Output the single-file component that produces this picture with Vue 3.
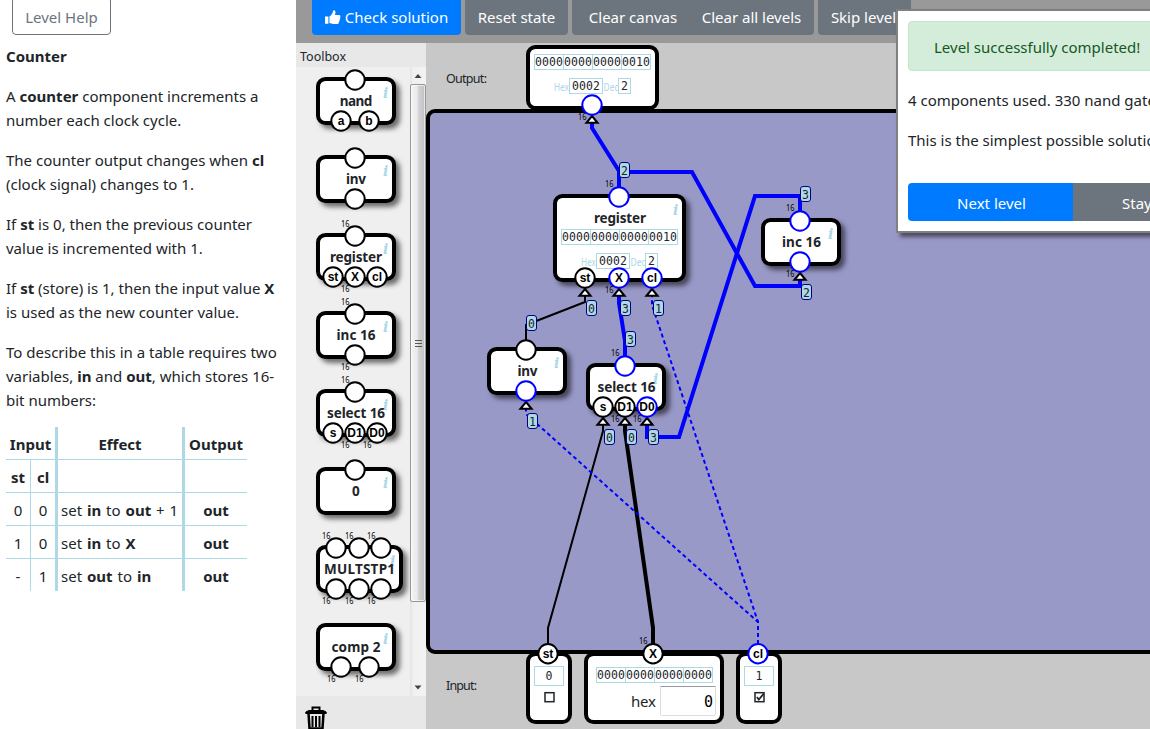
<script setup>
// Builds a pin: x/y of the centre, optional caption, "live" when its signal is high,
// "wide" when it carries 16 bits.
const top = (x, o = {}) => ({ x, y: 3, wy: -6.5, ...o })
const low = (x, t = '', o = {}) => ({ x, y: 44, wy: 59, t, ...o })
const wide = { wide: true }

const tools = [
  { name: 'nand', len: 32.5, w: 80, pins: [top(39), low(25, 'a'), low(53, 'b')] },
  { name: 'inv', len: 20, w: 80, pins: [top(39), low(39)] },
  { name: 'register', len: 52, w: 80, pins: [top(39, wide), low(17, 'st'), low(39, 'X', wide), low(61, 'cl')] },
  { name: 'inc 16', len: 39, w: 80, pins: [top(39, wide), low(39, '', wide)] },
  { name: 'select 16', len: 58, w: 80, pins: [top(39, wide), low(17, 's'), low(39, 'D1', wide), low(61, 'D0', wide)] },
  { name: '0', len: 8, w: 80, pins: [top(39)] },
  { name: 'MULTSTP1', len: 71, w: 87, pins: [top(20, wide), top(43, wide), top(65, wide), low(20, '', wide), low(43, '', wide), low(65, '', wide)] },
  { name: 'comp 2', len: 49, w: 80, pins: [low(25, '', wide), low(53, '', wide)] }
]

const nodes = [
  { name: 'register', len: 52, x: 553, y: 194, w: 133, h: 88 },
  { name: 'inc 16', len: 39, x: 761, y: 218, w: 80, h: 48 },
  { name: 'inv', len: 20, x: 487, y: 347, w: 80, h: 48 },
  { name: 'select 16', len: 58, x: 586, y: 363, w: 80, h: 48 }
]

const ports = [
  { x: 526, y: 45, w: 133, h: 65 },
  { x: 526, y: 652, w: 46, h: 72 },
  { x: 584, y: 652, w: 140, h: 72 },
  { x: 736, y: 652, w: 46, h: 72 }
]

const pins = [
  { x: 592, y: 105, live: true, arrow: true, w: 120 },
  { x: 619, y: 197, live: true, w: 187 },
  { x: 585, y: 278, t: 'st', arrow: true },
  { x: 619, y: 278, t: 'X', live: true, arrow: true, w: 293 },
  { x: 652, y: 278, t: 'cl', live: true, arrow: true },
  { x: 800, y: 221, live: true, w: 211 },
  { x: 800, y: 262, live: true, arrow: true, w: 277 },
  { x: 526, y: 350 },
  { x: 526, y: 391, live: true, arrow: true },
  { x: 625, y: 366, live: true, w: 356 },
  { x: 603, y: 407, t: 's', arrow: true },
  { x: 625, y: 407, t: 'D1', arrow: true, w: 422 },
  { x: 647, y: 407, t: 'D0', live: true, arrow: true, w: 422 },
  { x: 548, y: 653.7, t: 'st' },
  { x: 653, y: 653.7, t: 'X', w: 644 },
  { x: 758, y: 653.7, t: 'cl', live: true }
]

const wires = [
  { k: 'live', p: '592,122 592,128 619,171 619,187' },
  { k: 'live', p: '619,172 692,172 755,286 800,286 800,278' },
  { k: 'live', p: '800,211 800,196 755,196 679,437 647,437 647,424' },
  { k: 'live', p: '619,295 619,303 625,341 625,357' },
  { k: 'thin', p: '585,295 585,302 526,325 526,341' },
  { k: 'thin', p: '603,424 603,431 548,628 548,645' },
  { k: 'bus', p: '625,424 625,431 653,628 653,645' },
  { k: 'clock', p: '758,644 758,622 526,414 526,408' },
  { k: 'clock', p: '758,644 758,622 652,305 652,295' }
]

const values = [
  [2, 624.5, 170], [3, 805.5, 194], [2, 806.5, 292], [0, 591.5, 308], [3, 625.5, 308], [1, 658.5, 308],
  [0, 531.5, 323], [3, 630.5, 339], [1, 532.5, 421], [0, 609.5, 437], [0, 631.5, 437], [3, 653.5, 437]
]

const words = [
  { x: 534.5, y: 54.5, h: 15, b: 66, bits: ['0000', '0000', '0000', '0010'] },
  { x: 561.5, y: 229.5, h: 15, b: 241, bits: ['0000', '0000', '0000', '0010'] },
  { x: 596.5, y: 667.5, h: 15, b: 679, bits: ['0000', '0000', '0000', '0000'] }
]

const readouts = [{ x: 554, y: 78.5 }, { x: 581, y: 253.5 }]
</script>

<template>
  <div class="page">
    <aside class="help">
      <button class="help-btn">Level Help</button>
      <p><b>Counter</b></p>
      <p>A <b>counter</b> component increments a<br>number each clock cycle.</p>
      <p>The counter output changes when <b>cl</b><br>(clock signal) changes to 1.</p>
      <p>If <b>st</b> is 0, then the previous counter<br>value is incremented with 1.</p>
      <p>If <b>st</b> (store) is 1, then the input value <b>X</b><br>is used as the new counter value.</p>
      <p>To describe this in a table requires two<br>variables, <b>in</b> and <b>out</b>, which stores 16-<br>bit numbers:</p>
      <div class="table">
        <div class="c wide-cell"><b>Input</b></div><div class="c thick"><b>Effect</b></div><div class="c"><b>Output</b></div>
        <div class="c thin-r"><b>st</b></div><div class="c thick"><b>cl</b></div><div class="c thick"></div><div class="c"></div>
        <div class="c thin-r">0</div><div class="c thick">0</div><div class="c thick left"><span>set <b>in</b> to <b>out</b> + 1</span></div><div class="c"><b>out</b></div>
        <div class="c thin-r">1</div><div class="c thick">0</div><div class="c thick left"><span>set <b>in</b> to <b>X</b></span></div><div class="c"><b>out</b></div>
        <div class="c thin-r last">-</div><div class="c thick last">1</div><div class="c thick left last"><span>set <b>out</b> to <b>in</b></span></div><div class="c last"><b>out</b></div>
      </div>
    </aside>

    <main class="main">
      <header class="bar">
        <button class="btn primary check">
          <svg width="16" height="15" viewBox="0 0 16 15"><path fill="#fff" d="M0 6.4h3.400v7.400H0zM4.400 6.600C6 5.600 7.300 3.800 7.700 2.300 7.900 1.100 8 .3 9 .3c1.200 0 1.600 1.100 1.500 2.200-.1 1-.4 1.700-.6 2.500h3.900c1 0 1.700.6 1.700 1.400 0 .6-.3 1-.7 1.200.4.3.5.700.4 1.200-.1.5-.4.9-.8 1 .3.4.3.8.2 1.200-.1.500-.5.800-.9.900.2.400.2.700.1 1-.2.700-.8 1-1.600 1H8.400c-1.600 0-2.500-.800-4-1z"/></svg>
          <span>Check solution</span>
        </button>
        <button class="btn reset"><span>Reset state</span></button>
        <div class="group">
          <button class="btn canvas-btn"><span>Clear canvas</span></button>
          <button class="btn levels"><span>Clear all levels</span></button>
        </div>
        <button class="btn skip"><span>Skip level</span></button>
      </header>

      <div class="work">
        <section class="toolbox">
          <div class="tb-head">Toolbox</div>
          <div class="tb-body">
            <div class="tb-list">
              <svg v-for="t in tools" :key="t.name" class="tool" width="114" height="78" viewBox="-20 -10 114 78">
                <rect class="box shadow" x="2" y="2" :width="t.w - 4" height="44" rx="7.500" />
                <g v-for="(p, i) in t.pins" :key="i">
                  <circle class="pin" :cx="p.x" :cy="p.y" r="9.700" />
                  <text v-if="p.t" class="cap" :x="p.x" :y="p.y + 4.300">{{ p.t }}</text>
                  <text v-if="p.wide" class="bw" :x="p.x - 14" :y="p.wy" textLength="8.500" lengthAdjust="spacingAndGlyphs">16</text>
                </g>
                <text class="info" :x="t.w - 13" y="21">i</text>
                <text class="name" :x="t.w / 2 - t.len / 2" y="29" :textLength="t.len">{{ t.name }}</text>
              </svg>
            </div>
            <div class="scroll">
              <svg width="16" height="17" viewBox="0 0 16 17"><path d="M4.500 11l3.500-4 3.500 4z" fill="#444" /></svg>
              <div class="thumb"><i></i><i></i><i></i></div>
              <svg class="down" width="16" height="17" viewBox="0 0 16 17"><path d="M4.500 6.500h7l-3.500 4z" fill="#444" /></svg>
            </div>
          </div>
          <div class="trash">
            <svg width="22" height="24" viewBox="0 0 22 24" fill="none" stroke="#000">
              <path d="M7.500 4V1.500h7V4" stroke-width="2" />
              <path d="M.800 7.500V6l3-1.500h14.400l3 1.500v1.500z" fill="#000" stroke-width="1" />
              <path d="M3.500 7l1 15.500h13l1-15.500" stroke-width="2.500" />
              <path d="M7.500 10v11M11 10v11M14.500 10v11" stroke-width="2" />
            </svg>
          </div>
        </section>

        <svg class="canvas" width="724" height="686" viewBox="426 43 724 686">
          <rect v-for="(n, i) in ports" :key="i" class="box" :x="n.x + 2" :y="n.y + 2" :width="n.w - 4" :height="n.h - 4" rx="7.500" />
          <rect class="board" x="428" y="111" width="760" height="541" rx="7" />
          <text class="lbl" x="446" y="83" textLength="41">Output:</text>
          <text class="lbl" x="446" y="690" textLength="31">Input:</text>

          <g v-for="(n, i) in nodes" :key="'n' + i">
            <rect class="box shadow" :x="n.x + 2" :y="n.y + 2" :width="n.w - 4" :height="n.h - 4" rx="7.500" />
            <text class="info" :x="n.x + n.w - 13" :y="n.y + 21">i</text>
            <text class="name" :x="n.x + n.w / 2 - n.len / 2 + .500" :y="n.y + 29" :textLength="n.len">{{ n.name }}</text>
          </g>

          <polyline v-for="(w, i) in wires" :key="'w' + i" :class="['wire', w.k]" :points="w.p" />

          <g v-for="(w, i) in words" :key="'b' + i">
            <template v-for="(b, j) in w.bits" :key="j">
              <rect class="cell" :x="w.x + j * 29" :y="w.y" width="29" :height="w.h" />
              <text class="mono" :x="w.x + j * 29 + .500" :y="w.b" textLength="28">{{ b }}</text>
            </template>
          </g>
          <g v-for="(r, i) in readouts" :key="'r' + i">
            <text class="tag" :x="r.x" :y="r.y + 12" textLength="15" lengthAdjust="spacingAndGlyphs">Hex</text>
            <rect class="cell" :x="r.x + 15.500" :y="r.y" width="33" height="15" />
            <text class="mono" :x="r.x + 18" :y="r.y + 11.500" textLength="28">0002</text>
            <text class="tag" :x="r.x + 49.500" :y="r.y + 12" textLength="15" lengthAdjust="spacingAndGlyphs">Dec</text>
            <rect class="cell" :x="r.x + 64.500" :y="r.y" width="12" height="15" />
            <text class="mono" :x="r.x + 67" :y="r.y + 11.500">2</text>
          </g>

          <rect class="cell" x="534.500" y="666.500" width="29" height="19" />
          <text class="mono" x="545.500" y="680">0</text>
          <rect class="cell" x="744.500" y="666.500" width="29" height="19" />
          <text class="mono" x="755.500" y="680">1</text>
          <rect class="tick" x="545" y="692.700" width="9" height="9" />
          <rect class="tick" x="755" y="692.700" width="9" height="9" />
          <path class="mark" d="M756.800 697l2 2.600 5-6" />
          <text class="hex" x="631" y="707" textLength="25">hex</text>
          <rect class="field" x="660.500" y="686.500" width="55" height="29" rx="1" />
          <path d="M660.500 686.500h55" stroke="#999" />
          <text class="num" x="704" y="707">0</text>

          <g v-for="(p, i) in pins" :key="'p' + i">
            <path v-if="p.arrow" class="arrow" :d="`M${p.x} ${p.y + 11}l5.600 6.800h-11.200z`" />
            <circle :class="['pin', { on: p.live }]" :cx="p.x" :cy="p.y" r="9.700" />
            <text v-if="p.t" class="cap" :x="p.x" :y="p.y + 4.300">{{ p.t }}</text>
            <text v-if="p.w" class="bw" :x="p.x - 14" :y="p.w" textLength="8.500" lengthAdjust="spacingAndGlyphs">16</text>
          </g>
          <g v-for="(v, i) in values" :key="'v' + i">
            <rect class="val" :x="v[1] - 5" :y="v[2] - 7.500" width="10" height="15" rx="2.500" />
            <text class="mono mid" :x="v[1]" :y="v[2] + 4.500">{{ v[0] }}</text>
          </g>
        </svg>
      </div>
    </main>

    <div class="popup">
      <div class="alert"><span>Level successfully completed!</span></div>
      <p>4 components used. 330 nand gates in total.</p>
      <p>This is the simplest possible solution!</p>
      <div class="actions">
        <button class="next">Next level</button>
        <button class="stay">Stay on this level</button>
      </div>
    </div>
  </div>
</template>

<style>
html, body { margin: 0; overflow: hidden; }
</style>

<style scoped>
.page {
  position: relative; display: flex; width: 1150px; height: 729px; overflow: hidden;
  background: #fff; color: #212529;
  font: 15px/24px "Noto Sans", "Open Sans", sans-serif;
}
button { font: inherit; border: 0; margin: 0; padding: 0; display: block; white-space: nowrap; }
.help { box-sizing: border-box; width: 296px; flex: none; padding: 0 0 0 6px; white-space: nowrap; }
.help-btn {
  box-sizing: border-box; width: 99px; height: 38px; margin: -3px 0 9px 6px; padding-top: 2px;
  border: 1px solid #6c757d; border-radius: 4px; background: #fff; color: #6c757d;
}
.help p { margin: 0 0 16px; }
.table {
  display: grid; grid-template-columns: 25px 27px 127px 62px; grid-template-rows: repeat(4, 33px) 32px;
  width: 241px; margin-top: -1px;
}
.c {
  display: flex; align-items: center; justify-content: center; padding-top: 2px;
  border-bottom: 1px solid #add8e6;
}
.wide-cell { grid-column: span 2; border-right: 3px solid #add8e6; }
.thick { border-right: 3px solid #add8e6; }
.thin-r { border-right: 1px solid #add8e6; }
.left { justify-content: flex-start; padding-left: 3px; word-spacing: 1px; }
.last { border-bottom: 0; }

.main { flex: 1; display: flex; flex-direction: column; min-width: 0; }
.bar { display: flex; gap: 4px; height: 43px; padding-left: 16px; background: #999; flex: none; }
.btn {
  display: flex; align-items: center; justify-content: center; height: 35px; box-sizing: border-box;
  padding-bottom: 1px; background: #6c757d; color: #fff; border-radius: 0 0 4px 4px;
}
.primary { background: #007bff; }
.check { width: 149px; gap: 4px; }
.reset { width: 103px; }
.group { display: flex; }
.canvas-btn { width: 122px; border-radius: 0 0 0 4px; }
.levels { width: 120px; border-radius: 0 0 4px 0; padding-right: 5px; }
.skip { width: 93px; padding-right: 2px; }

.work { display: flex; flex: 1; min-height: 0; }
.toolbox { width: 130px; flex: none; display: flex; flex-direction: column; background: #e8e8e8; overflow: hidden; }
.tb-head { flex: none; height: 24px; padding: 2px 0 0 4px; box-sizing: border-box; font-size: 12.500px; }
.tb-body { display: flex; flex: none; height: 629px; background: #efefef; overflow: hidden; }
.tb-list { width: 114px; display: flex; flex-direction: column; }
.tool { display: block; flex: none; overflow: visible; }
.scroll {
  width: 16px; display: flex; flex-direction: column; box-sizing: border-box;
  background: linear-gradient(90deg, #e3e3e3, #f0f0f0 20%, #f3f3f3);
}
.scroll svg { flex: none; display: block; }
.thumb {
  box-sizing: border-box; flex: none; height: 518px; border: 1px solid #979797; border-radius: 2px;
  background: linear-gradient(90deg, #f5f5f5 0%, #e9e9eb 45%, #d2d2d5 55%, #c0c0c4 100%);
  display: flex; flex-direction: column; align-items: center; justify-content: center; gap: 2px;
  box-shadow: inset 0 0 0 1px rgba(255, 255, 255, .6);
}
.thumb i { width: 7px; height: 1px; background: #555; }
.scroll .down { margin-top: auto; }
.trash { flex: none; height: 33px; box-sizing: border-box; padding: 10px 0 0 9px; overflow: hidden; }
.trash svg { display: block; }

.canvas { display: block; background: #c8c8c8; flex: none; }
.board { fill: #9999c8; stroke: #000; stroke-width: 4; }
.box { fill: #fff; stroke: #000; stroke-width: 4; }
.shadow { filter: drop-shadow(4px 4px 2.500px rgba(0, 0, 0, .55)); }
.pin { fill: #fff; stroke: #000; stroke-width: 2; }
.on { stroke: #0000ff; }
.arrow { fill: #fff; stroke: #000; stroke-width: 2; }
.wire { fill: none; }
.live { stroke: #0000ff; stroke-width: 4; }
.thin { stroke: #000; stroke-width: 2; }
.bus { stroke: #000; stroke-width: 4; }
.clock { stroke: #0000ff; stroke-width: 2; stroke-dasharray: 4 3; }
.cell { fill: #fff; stroke: #add8e6; stroke-width: 1; }
.val { fill: #add8e6; stroke: #000080; stroke-width: 1; }
.tick { fill: #fff; stroke: #212529; stroke-width: 1.500; }
.mark { fill: none; stroke: #212529; stroke-width: 1.700; }
.field { fill: #fff; stroke: #dcdce2; }
text { fill: #212529; font-family: "Noto Sans", "Open Sans", sans-serif; }
.name { font-size: 13.500px; font-weight: 700; }
.lbl { font-size: 12.500px; }
.hex { font-size: 15px; }
.cap { font: 700 12px "Liberation Sans", sans-serif; fill: #000; text-anchor: middle; }
.bw { font-size: 9px; fill: #000; }
.info { font: italic 700 14px "DejaVu Serif", serif; fill: #add8e6; }
.tag { font-size: 10.500px; fill: #add8e6; }
.mono { font: 11.500px "DejaVu Sans Mono", monospace; }
.mid { text-anchor: middle; }
.num { font: 15px "DejaVu Sans Mono", monospace; fill: #000; }

.popup {
  position: absolute; left: 896px; top: 9px; box-sizing: border-box; width: 360px; height: 224px;
  border: 2px solid #808080; background: #fff; padding: 10px;
  box-shadow: 4px 4px 4px rgba(0, 0, 0, .5); white-space: nowrap;
}
.alert {
  box-sizing: border-box; height: 50px; margin-bottom: 17px; padding: 13px 0 0 25px;
  border: 1px solid #c3e6cb; border-radius: 4px; background: #d4edda; color: #155724;
}
.popup p { margin: 0 0 16px; }
.actions { display: flex; margin-top: 31px; }
.next { width: 165px; height: 38px; background: #007bff; color: #fff; border-radius: 4px 0 0 4px; padding: 2px 0 0 2px; }
.stay { flex: 1; padding: 2px 0 0 49px; text-align: left; background: #6c757d; color: #fff; }
</style>
